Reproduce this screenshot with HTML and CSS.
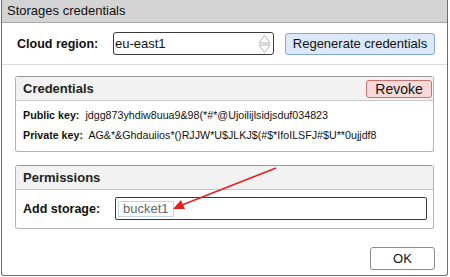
FILE: index.html
```html
<!DOCTYPE html>
<html lang="en">
<head>
  <meta charset="UTF-8">
  <title>Storages credentials</title>
  <link rel="stylesheet" href="styles.css">
</head>
<body>
  <div class="dialog">
    <div class="titlebar">Storages credentials</div>

    <div class="region-row">
      <span class="label">Cloud region:</span>
      <div class="select">
        <span>eu-east1</span>
        <svg class="spinner" width="13" height="20" viewBox="0 0 13 20">
          <path d="M1 9 L6.5 1.5 L12 9 Z" fill="none" stroke="#b5b5b5"/>
          <path d="M1 11 L6.5 18.5 L12 11 Z" fill="none" stroke="#b5b5b5"/>
        </svg>
      </div>
      <button class="btn btn-blue">Regenerate credentials</button>
    </div>

    <div class="content">
      <div class="panel">
        <div class="panel-head">
          <span>Credentials</span>
          <button class="btn btn-red">Revoke</button>
        </div>
        <div class="panel-body keys">
          <div class="key-row"><b>Public key:</b> jdgg873yhdiw8uua9&amp;98(*#*@Ujoilijlsidjsduf034823</div>
          <div class="key-row"><b>Private key:</b> AG&amp;*&amp;Ghdauiios*()RJJW*U$JLKJ$(#$*IfoILSFJ#$U**0ujjdf8</div>
        </div>
      </div>

      <div class="panel">
        <div class="panel-head">
          <span>Permissions</span>
        </div>
        <div class="panel-body storage-row">
          <span class="label">Add storage:</span>
          <div class="tag-input">
            <span class="tag">bucket1</span>
          </div>
        </div>
      </div>
    </div>

    <div class="footer">
      <button class="btn btn-ok">OK</button>
    </div>

    <svg class="arrow" width="110" height="50" viewBox="0 0 110 50">
      <line x1="106" y1="2" x2="12" y2="39" stroke="#e8201c" stroke-width="1.5"/>
      <path d="M3 43 L11 34 L15 43 Z" fill="#e8201c"/>
    </svg>
  </div>
</body>
</html>
```

FILE: styles.css
```css
body {
  margin: 0;
  background: #fff;
  font-family: "Liberation Sans", Arial, sans-serif;
  color: #111;
}
.dialog {
  position: relative;
  box-sizing: border-box;
  width: 447px;
  height: 276px;
  margin-left: 1px;
  border: 1px solid #6e6e6e;
  border-top: none;
  border-radius: 0 0 3px 3px;
  display: flex;
  flex-direction: column;
}
.titlebar {
  height: 22px;
  line-height: 22px;
  padding-left: 5px;
  background: #d4d4d4;
  border-bottom: 1px solid #a8a8a8;
  font-size: 13px;
  color: #111;
}
.label {
  font-weight: bold;
  font-size: 12.5px;
}
.region-row {
  display: flex;
  align-items: center;
  height: 41px;
  padding-left: 15px;
  border-bottom: 1px solid #dcdcdc;
}
.region-row .label {
  width: 96px;
}
.select {
  box-sizing: border-box;
  width: 161px;
  height: 23px;
  border: 1px solid #3a3a3a;
  border-radius: 3px;
  display: flex;
  align-items: center;
  justify-content: space-between;
  padding: 0 2px 0 1px;
  font-size: 13px;
}
.btn {
  font-family: inherit;
  font-size: 13px;
  color: #111;
  border-radius: 3px;
  padding: 0;
  cursor: pointer;
}
.btn-blue {
  margin-left: 11px;
  width: 150px;
  height: 22px;
  background: #dce8f8;
  border: 1px solid #88a8d4;
}
.content {
  padding: 11px 13px 0 13px;
  display: flex;
  flex-direction: column;
  gap: 13px;
}
.panel {
  border: 1px solid #b4b4b4;
  border-top-color: #999;
  border-radius: 3px;
}
.panel-head {
  height: 23px;
  background: #f2f2f2;
  border-bottom: 1px solid #c8c8c8;
  display: flex;
  align-items: center;
  justify-content: space-between;
  padding: 0 1px 0 7px;
  font-weight: bold;
  font-size: 13px;
  color: #222;
}
.btn-red {
  width: 66px;
  height: 18px;
  background: #f9d8d8;
  border: 1px solid #cc7070;
  font-size: 14px;
  margin-top: 1px;
}
.keys {
  padding: 8px 0 9px 7px;
  font-size: 10.7px;
  display: flex;
  flex-direction: column;
  gap: 7px;
}
.key-row {
  height: 13px;
  line-height: 13px;
}
.key-row b {
  margin-right: 3px;
}
.storage-row {
  display: flex;
  align-items: center;
  padding: 7px 0 8px 7px;
}
.storage-row .label {
  width: 92px;
}
.tag-input {
  box-sizing: border-box;
  width: 312px;
  height: 23px;
  border: 1px solid #3a3a3a;
  border-radius: 2px;
  display: flex;
  align-items: center;
  padding-left: 2px;
}
.tag {
  box-sizing: border-box;
  height: 16px;
  line-height: 14px;
  padding: 0 4px;
  border: 1px solid #bcd6f2;
  font-size: 13px;
  color: #666;
}
.footer {
  margin-top: auto;
  display: flex;
  justify-content: flex-end;
  padding: 0 12px 5px 0;
}
.btn-ok {
  width: 65px;
  height: 23px;
  background: #fff;
  border: 1px solid #8c8c8c;
  font-size: 13px;
}
.arrow {
  position: absolute;
  left: 168px;
  top: 166px;
}
```
